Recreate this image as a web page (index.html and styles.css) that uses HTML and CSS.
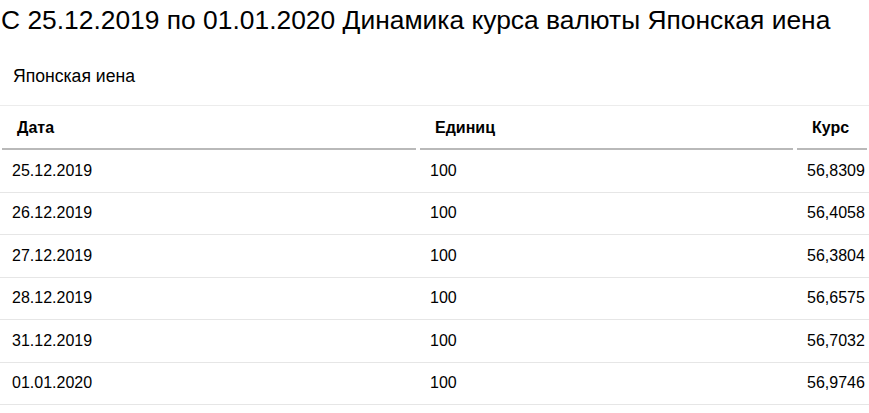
FILE: index.html
```html
<!DOCTYPE html>
<html lang="ru">
<head>
<meta charset="utf-8">
<title>Динамика курса валюты</title>
<link rel="stylesheet" href="styles.css">
</head>
<body>
<h1 class="title">С 25.12.2019 по 01.01.2020 Динамика курса валюты Японская иена</h1>
<div class="currency">Японская иена</div>
<table class="rates">
  <colgroup>
    <col class="c-date">
    <col class="c-units">
    <col class="c-rate">
  </colgroup>
  <thead>
    <tr>
      <th>Дата</th>
      <th>Единиц</th>
      <th class="num">Курс</th>
    </tr>
  </thead>
  <tbody>
    <tr><td>25.12.2019</td><td>100</td><td class="num">56,8309</td></tr>
    <tr><td>26.12.2019</td><td>100</td><td class="num">56,4058</td></tr>
    <tr><td>27.12.2019</td><td>100</td><td class="num">56,3804</td></tr>
    <tr><td>28.12.2019</td><td>100</td><td class="num">56,6575</td></tr>
    <tr><td>31.12.2019</td><td>100</td><td class="num">56,7032</td></tr>
    <tr><td>01.01.2020</td><td>100</td><td class="num">56,9746</td></tr>
  </tbody>
</table>
</body>
</html>
```
FILE: styles.css
```css
html, body {
  margin: 0;
  padding: 0;
  background: #fff;
  color: #000;
  font-family: "Liberation Sans", Arial, sans-serif;
}

.title {
  margin: 6px 0 0 1px;
  font-size: 26.4px;
  font-weight: normal;
  line-height: 28px;
  white-space: nowrap;
}

.currency {
  margin: 32px 0 0 13px;
  font-size: 17.6px;
  line-height: 20px;
}

.rates {
  margin-top: 19px;
  width: 100%;
  table-layout: fixed;
  border-collapse: separate;
  border-spacing: 0;
  font-size: 16px;
}

.c-date { width: 418px; }
.c-units { width: 377px; }

.rates th {
  text-align: left;
  font-weight: bold;
  font-size: 16px;
  line-height: 20px;
  padding: 12px 12px 12px 17px;
  border-top: 1px solid #ececec;
  background: linear-gradient(#b9b9b9, #b9b9b9) no-repeat center bottom / calc(100% - 4px) 2px;
}

.rates th.num {
  text-align: right;
  padding-right: 23px;
}

.rates td {
  line-height: 20px;
  padding: 10.75px 12px;
  border-bottom: 1px solid #e6e6e6;
}

.rates td.num {
  text-align: right;
  padding-right: 8px;
}
```
